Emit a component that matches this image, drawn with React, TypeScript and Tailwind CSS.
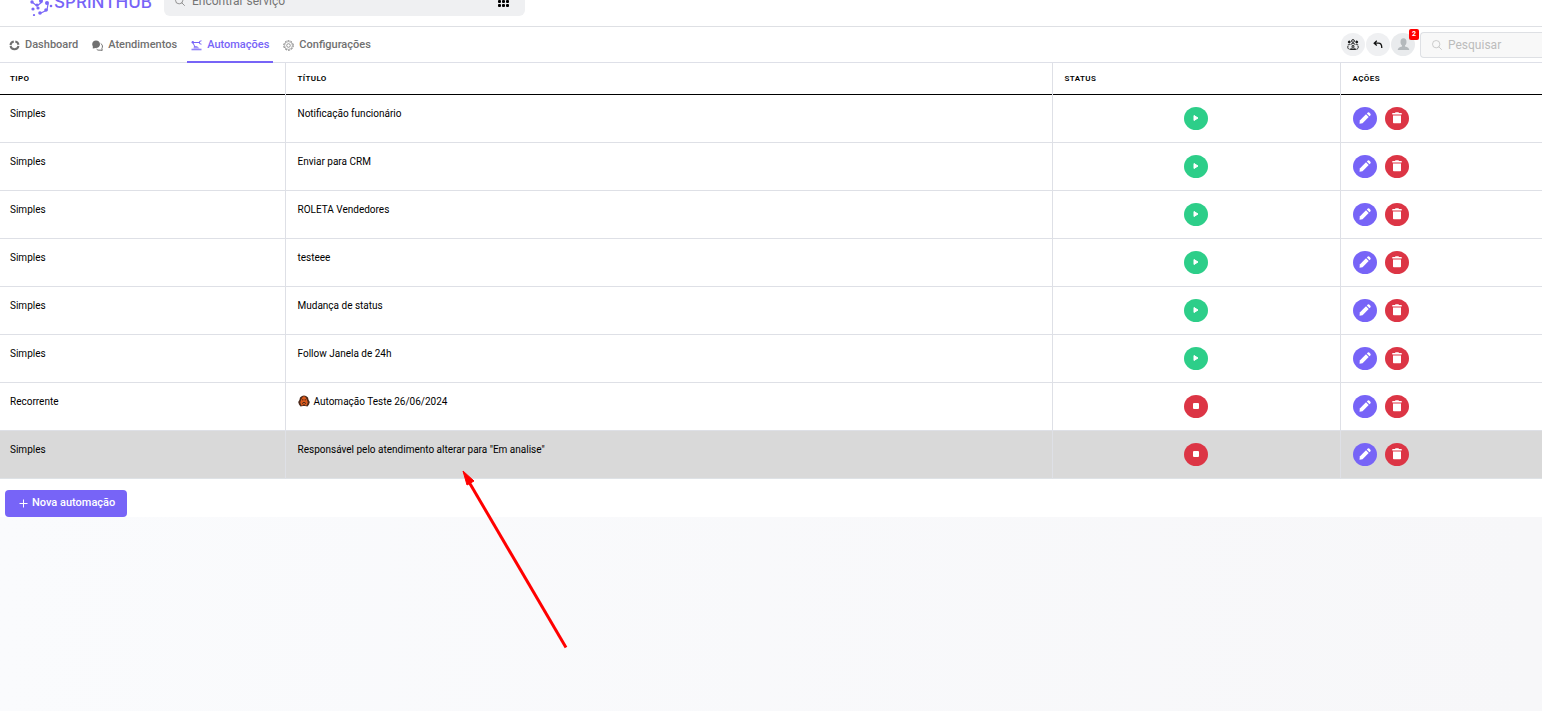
import type { ReactNode } from "react"
import { IoSearchOutline } from "react-icons/io5"

type Automation = {
  id: number
  type: string
  title: string
  running: boolean
  icon?: boolean
  selected?: boolean
}

const automations: Automation[] = [
  { id: 1, type: "Simples", title: "Notificação funcionário", running: true },
  { id: 2, type: "Simples", title: "Enviar para CRM", running: true },
  { id: 3, type: "Simples", title: "ROLETA Vendedores", running: true },
  { id: 4, type: "Simples", title: "testeee", running: true },
  { id: 5, type: "Simples", title: "Mudança de status", running: true },
  { id: 6, type: "Simples", title: "Follow Janela de 24h", running: true },
  { id: 7, type: "Recorrente", title: "Automação Teste 26/06/2024", running: false, icon: true },
  { id: 8, type: "Simples", title: 'Responsável pelo atendimento alterar para "Em analise"', running: false, selected: true },
]

function LogoMark() {
  return (
    <svg width="24" height="28" viewBox="0 0 24 28" fill="#7b68f8" stroke="#7b68f8" aria-hidden="true">
      <g strokeWidth="1.2" fill="none">
        <path d="M2 14 L7 18 L12 14 M11 25 L17 22 L18 16" />
      </g>
      <g stroke="none">
        <circle cx="2" cy="14" r="1.7" />
        <circle cx="7" cy="17" r="1.6" />
        <circle cx="11" cy="13" r="2" />
        <circle cx="3" cy="21" r="1.6" />
        <circle cx="8" cy="20" r="1.6" />
        <circle cx="10" cy="25" r="1.8" />
        <circle cx="16" cy="22" r="1.8" />
        <circle cx="17" cy="15" r="2" />
        <circle cx="4" cy="27" r="1.1" />
        <circle cx="21" cy="18" r="1.3" />
      </g>
    </svg>
  )
}

function DashboardIcon() {
  return (
    <svg width="11" height="11" viewBox="0 0 11 11" fill="none" stroke="currentColor" strokeWidth="2" aria-hidden="true">
      <path d="M6.3 1.5 A4.1 4.1 0 0 1 9.5 4.7" />
      <path d="M9.5 6 A4.1 4.1 0 0 1 1.5 6" />
      <path d="M1.5 5.2 A4.1 4.1 0 0 1 4.8 1.5" />
    </svg>
  )
}

function ChatIcon() {
  return (
    <svg width="11" height="11" viewBox="0 0 11 11" aria-hidden="true">
      <path d="M4 0.5 C6.3 0.5 8 2 8 4.2 C8 6.4 6.3 8 4 8 L0.8 8.5 L0.8 6.3 C-0.8 3.5 1 0.5 4 0.5Z" fill="currentColor" />
      <path d="M8.7 3.5 C10.8 4.7 10.8 7 9.9 8.5 L10.2 10.4 L8 10.1 C6.6 10.4 5.3 10 4.6 9.1" fill="none" stroke="currentColor" />
    </svg>
  )
}

function RobotArmIcon() {
  return (
    <svg width="11" height="11" viewBox="0 0 11 11" fill="none" stroke="currentColor" aria-hidden="true">
      <path d="M2 2.5 H8 M1.8 2.5 L4 7" />
      <path d="M10.5 0.8 L8.5 1.4 V3.6 L10.5 4.2" />
      <circle cx="1.8" cy="2.3" r="1.2" fill="currentColor" stroke="none" />
      <path d="M3 6 H6 L8.5 8.5 H2.5Z" fill="currentColor" stroke="none" opacity="0.7" />
      <path d="M0.5 9.5 H10.5" strokeWidth="1.6" opacity="0.8" />
    </svg>
  )
}

function GearIcon() {
  return (
    <svg width="11" height="11" viewBox="0 0 22 22" fill="none" stroke="currentColor" aria-hidden="true">
      <circle cx="11" cy="11" r="9.5" strokeWidth="2" strokeDasharray="3.7 2.27" />
      <circle cx="11" cy="11" r="7.8" strokeWidth="1" />
      <circle cx="11" cy="11" r="3.6" strokeWidth="1.4" />
    </svg>
  )
}

function GroupIcon() {
  return (
    <svg width="12" height="11" viewBox="0 0 24 22" fill="none" stroke="#111" strokeWidth="1.8" aria-hidden="true">
      <circle cx="12" cy="4" r="2.8" />
      <circle cx="4.5" cy="6" r="2" fill="#111" />
      <circle cx="19.5" cy="6" r="2" fill="#111" />
      <path d="M7.5 12 C7.5 8 16.5 8 16.5 12" />
      <circle cx="12" cy="14.500" r="2" />
      <path d="M6.5 21 C6.5 17 17.5 17 17.5 21Z" />
      <path d="M2 14 C0.5 18 2.5 20 5 20.5 M22 14 C23.5 18 21.5 20 19 20.5 M1.5 12 L5.5 11 M22.5 12 L18.5 11" />
    </svg>
  )
}

function BackIcon() {
  return (
    <svg width="10" height="9" viewBox="0 0 10 9" fill="none" stroke="#111" strokeWidth="1.3" aria-hidden="true">
      <path d="M3.8 0.8 L1.2 3.2 L3.8 5.6 M1.2 3.2 H5.5 Q8.8 3.2 8.8 8" />
    </svg>
  )
}

function MascotIcon() {
  return (
    <svg className="inline-block" width="12" height="12" viewBox="0 0 12 12" aria-hidden="true">
      <path d="M4 1 Q6 -0.2 8 1 L10 2.4 L10.6 5 L11.8 7 L11 9.5 L9.5 11.5 L7 11 H5 L2.5 11.5 L1 9.5 L0.2 7 L1.4 5 L2 2.4Z" fill="#4b2a1c" />
      <path d="M5 1.5 H7 L8.6 4 L9.8 7.4 L8.6 10.5 H7.5 L6 9 L4.5 10.5 H3.4 L2.2 7.4 L3.4 4Z" fill="#dc5a1c" />
      <path d="M4.8 4 V5.5 M7.2 4 V5.5 M4 8.6 L6 7.2 L8 8.6" stroke="#4b2a1c" fill="none" />
    </svg>
  )
}

function NavItem({ label, icon, active }: { label: string; icon: ReactNode; active?: boolean }) {
  return (
    <a
      href="#"
      className={
        active
          ? "flex h-full items-center gap-[5px] border-b-2 border-[#7764f7] px-1 pt-[5px] pb-px text-[#7764f7]"
          : "flex h-full items-center gap-[5px] border-b-2 border-transparent px-1 pt-[5px] pb-px"
      }
      aria-current={active ? "page" : undefined}
    >
      {icon}
      {label}
    </a>
  )
}

function RoundButton({ label, className, children }: { label: string; className: string; children: ReactNode }) {
  return (
    <button type="button" aria-label={label} className={`flex h-[23px] w-6 items-center justify-center rounded-[50%] ${className}`}>
      {children}
    </button>
  )
}

function AutomationRow({ item }: { item: Automation }) {
  return (
    <tr className={item.selected ? "h-12 border-b border-[#dee2e6] bg-[#d9d9d9]" : "h-12 border-b border-[#dee0e6]"}>
      <td className="border-r border-[#dee0e6] px-2.5 pt-[11px] align-top">{item.type}</td>
      <td className="border-r border-[#dee0e6] px-3 pt-[11px] align-top">
        <div className="flex items-center gap-1">
          {item.icon && <MascotIcon />}
          {item.title}
        </div>
      </td>
      <td className="border-r border-[#dee0e6]">
        <div className="flex justify-center">
          {item.running ? (
            <RoundButton label="Pausar" className="bg-[#2dce89]">
              <svg width="7" height="8" viewBox="0 0 7 8" aria-hidden="true">
                <path d="M1 1.5 L5 4 L1 6.5Z" fill="white" stroke="white" strokeLinejoin="round" />
              </svg>
            </RoundButton>
          ) : (
            <RoundButton label="Iniciar" className="bg-[#dc3545]">
              <svg width="6" height="6" viewBox="0 0 6 6" aria-hidden="true">
                <rect width="6" height="6" rx="1" fill="white" />
              </svg>
            </RoundButton>
          )}
        </div>
      </td>
      <td className="px-3">
        <div className="flex gap-2">
          <RoundButton label="Editar" className="bg-[#7764f7]">
            <svg width="12" height="12" viewBox="0 0 12 12" fill="white" aria-hidden="true">
              <path d="M7 2.3 L9.7 5 L3.5 11.2 L0.5 11.7 L0.8 8.5Z" />
              <path d="M7.8 1.5 L8.8 0.5 Q9.5 0 10.2 0.6 L11.4 1.8 Q12 2.5 11.5 3.2 L10.5 4.2Z" />
            </svg>
          </RoundButton>
          <RoundButton label="Excluir" className="bg-[#dc3545]">
            <svg width="10" height="12" viewBox="0 0 10 12" fill="white" aria-hidden="true">
              <path d="M0.3 1 H3 L3.5 0.2 H6.5 L7 1 H9.7 V2.5 H0.3Z" />
              <path d="M1 3.5 H9 V10.5 Q9 11.3 8.2 11.3 H1.8 Q1 11.3 1 10.5Z" />
            </svg>
          </RoundButton>
        </div>
      </td>
    </tr>
  )
}

export default function App() {
  return (
    <div className="relative min-h-screen overflow-hidden bg-linear-to-r from-[#fafbfd] to-[#f7f7f9] font-['Roboto',sans-serif] text-[10px] text-black">
      <div className="bg-white">
        <header className="flex h-[27px] items-end overflow-hidden border-b border-[#dee0e4] pl-[30px]">
          <div className="flex w-[134px] shrink-0 items-end pb-2.5">
            <LogoMark />
            <span className="pb-1 font-['Inter',sans-serif] text-[17px] leading-5 font-medium text-[#7764f7]">SPRINTHUB</span>
          </div>
          <div className="mb-2.5 flex h-[30px] w-[361px] items-center rounded-md bg-[#eff0f2] pr-4 pl-2.5 text-[#757575]">
            <IoSearchOutline size={12} />
            <input
              type="text"
              aria-label="Encontrar serviço"
              placeholder="Encontrar serviço"
              className="ml-1.5 min-w-0 flex-1 bg-transparent text-xs outline-none placeholder:text-[#757575]"
            />
            <button type="button" aria-label="Aplicativos">
              <svg width="11" height="11" viewBox="0 0 11 11" fill="black" aria-hidden="true">
                {[0, 4, 8].map((y) => [0, 4, 8].map((x) => <rect key={`${x}-${y}`} x={x} y={y} width="3" height="3" rx="1" />))}
              </svg>
            </button>
          </div>
        </header>

        <div className="flex h-9 items-center justify-between border-b border-[#dee0e8]">
          <nav className="ml-[5px] flex h-9 gap-1.5 text-[11px] font-medium text-[#707070]">
            <NavItem label="Dashboard" icon={<DashboardIcon />} />
            <NavItem label="Atendimentos" icon={<ChatIcon />} />
            <NavItem label="Automações" icon={<RobotArmIcon />} active />
            <NavItem label="Configurações" icon={<GearIcon />} />
          </nav>
          <div className="flex items-center gap-px">
            <RoundButton label="Equipes" className="bg-[#eff0f2]">
              <GroupIcon />
            </RoundButton>
            <RoundButton label="Voltar" className="bg-[#eff0f2]">
              <BackIcon />
            </RoundButton>
            <div className="relative">
              <RoundButton label="Perfil" className="bg-[#e9ebed]">
                <svg width="13" height="13" viewBox="0 0 13 13" fill="#b4b9bc" aria-hidden="true">
                  <ellipse cx="6.5" cy="4" rx="3" ry="3.7" />
                  <path d="M5 7 H8 V8.5 Q12 9 12.3 12 H0.7 Q1 9 5 8.5Z" />
                </svg>
              </RoundButton>
              <span className="absolute -top-1 -right-1 flex h-[11px] w-2.5 items-center justify-center rounded-xs bg-[#f00] text-[7px] font-bold text-white">2</span>
            </div>
            <div className="ml-1 flex h-[26px] w-[122px] items-center rounded-l-[4px] border border-r-0 border-[#dee0e4] bg-[#f8f8f8] pl-2.5 text-[#bcbcbc]">
              <IoSearchOutline size={12} />
              <input
                type="text"
                aria-label="Pesquisar"
                placeholder="Pesquisar"
                className="ml-[5px] min-w-0 flex-1 bg-transparent text-xs outline-none placeholder:text-[#bcbcbc]"
              />
            </div>
          </div>
        </div>

        <table className="w-full table-fixed border-collapse text-left leading-[15px]">
          <colgroup>
            <col className="w-[285px]" />
            <col />
            <col className="w-[288px]" />
            <col className="w-[202px]" />
          </colgroup>
          <thead>
            <tr className="h-[31px] border-b border-black text-[8px] tracking-wider">
              <th className="border-r border-r-[#dee0e6] px-2.5 font-semibold">TIPO</th>
              <th className="border-r border-r-[#dee0e6] px-3 font-semibold">TÍTULO</th>
              <th className="border-r border-r-[#dee0e6] px-3 font-semibold">STATUS</th>
              <th className="px-3 font-semibold">AÇÕES</th>
            </tr>
          </thead>
          <tbody>
            {automations.map((item) => (
              <AutomationRow key={item.id} item={item} />
            ))}
          </tbody>
        </table>

        <div className="px-[5px] pt-[11px]">
          <button type="button" className="flex h-[27px] items-center gap-1 rounded-[4px] bg-[#7764f7] pr-3 pl-3.5 text-[11px] font-medium text-white">
            <svg width="9" height="9" viewBox="0 0 9 9" stroke="white" aria-hidden="true">
              <path d="M4.5 0.5 V8.5 M0.5 4.5 H8.5" />
            </svg>
            Nova automação
          </button>
        </div>
      </div>

      {/* pointer to the selected automation */}
      <svg className="pointer-events-none absolute top-[470px] left-[462px]" width="106" height="180" viewBox="0 0 106 180" aria-hidden="true">
        <path d="M7 12 L104 177.500" stroke="#f00" strokeWidth="3" />
        <path d="M1 1 L12 11 L5 15Z" fill="#f00" stroke="#f00" />
      </svg>
    </div>
  )
}
